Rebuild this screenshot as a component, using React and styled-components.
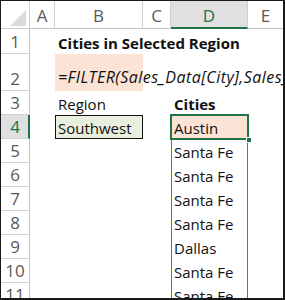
import React from "react";
import styled, { createGlobalStyle, css } from "styled-components";

const Global = createGlobalStyle`
  html, body { margin: 0; padding: 0; background: #fff; }
  * { box-sizing: border-box; }
`;

const COLS = [29, 25, 88, 28, 77, 35];
const ROWS = [28, 25, 37, 24, 24, 24, 24, 24, 24, 24, 24, 24];

const Frame = styled.div`
  width: 285px;
  height: 300px;
  overflow: hidden;
  border-top: 1px solid #1a1a1a;
  border-left: 1px solid #1a1a1a;
  border-right: 2px solid #1a1a1a;
  border-bottom: 2px solid #1a1a1a;
  background: #fff;
`;

const Sheet = styled.div`
  display: grid;
  grid-template-columns: ${COLS.map((c) => c + "px").join(" ")};
  grid-template-rows: ${ROWS.map((r) => r + "px").join(" ")};
  font-family: "Open Sans", "Noto Sans", sans-serif;
  font-size: 15px;
  color: #111;
`;

const Corner = styled.div`
  position: relative;
  border-right: 1px solid #d0d0d0;
  border-bottom: 1px solid #d0d0d0;
`;

const CornerTri = styled.svg`
  position: absolute;
  left: 9px;
  top: 9px;
`;

const ColHead = styled.div`
  display: flex;
  align-items: center;
  justify-content: center;
  color: #5a5a5a;
  font-size: 17px;
  border-right: 1px solid #d0d0d0;
  border-bottom: 1px solid #c4c4c4;
  padding-top: 2px;
  ${(p) =>
    p.$active &&
    css`
      background: #e0e0e0;
      color: #217346;
      border-bottom: 2px solid #217346;
      padding-top: 3px;
    `}
  ${(p) => p.$last && css`border-right: none;`}
`;

const RowHead = styled.div`
  display: flex;
  align-items: flex-end;
  justify-content: center;
  padding-bottom: 0;
  color: #5a5a5a;
  font-size: 17px;
  border-right: 1px solid #c4c4c4;
  border-bottom: 1px solid #d0d0d0;
  ${(p) =>
    p.$active &&
    css`
      background: #e0e0e0;
      color: #217346;
      border-right: 2px solid #217346;
      padding-left: 1px;
    `}
`;

const Cell = styled.div`
  position: relative;
  display: flex;
  align-items: flex-end;
  padding: 0 0 1px 3px;
  white-space: nowrap;
  overflow: visible;
  ${(p) => p.$bold && css`font-weight: 700;`}
  ${(p) =>
    p.$formula &&
    css`
      background: #fbe3d6;
      font-style: italic;
      font-size: 16px;
      letter-spacing: 0.45px;
      padding-bottom: 3px;
      z-index: 1;
    `}
  ${(p) =>
    p.$input &&
    css`
      background: #e9efdf;
      outline: 1px solid #111;
      outline-offset: -1px;
    `}
  ${(p) =>
    p.$spill &&
    css`
      border-left: 1px solid #4a72c2;
      border-right: 1px solid #4a72c2;
      padding-left: 2px;
    `}
  ${(p) =>
    p.$activeCell &&
    css`
      background: #fbe3d6;
      outline: 2px solid #217346;
      outline-offset: -1px;
      z-index: 2;
    `}
`;

const FillHandle = styled.span`
  position: absolute;
  right: -4px;
  bottom: -4px;
  width: 6px;
  height: 6px;
  background: #217346;
  border: 1px solid #fff;
  z-index: 3;
`;

const letters = ["A", "B", "C", "D", "E"];
const cities = ["Santa Fe", "Santa Fe", "Santa Fe", "Santa Fe", "Dallas", "Santa Fe", "Santa Fe"];

function rowCells(r) {
  const blank = (k) => <Cell key={k} />;
  if (r === 1)
    return [blank("a"), <Cell key="b" $bold>Cities in Selected Region</Cell>, blank("c"), blank("d"), blank("e")];
  if (r === 2)
    return [
      blank("a"),
      <Cell key="b" $formula>=FILTER(Sales_Data[City],Sales_Data[Region]=B4)</Cell>,
      blank("c"),
      blank("d"),
      blank("e"),
    ];
  if (r === 3)
    return [blank("a"), <Cell key="b">Region</Cell>, blank("c"), <Cell key="d" $bold>Cities</Cell>, blank("e")];
  if (r === 4)
    return [
      blank("a"),
      <Cell key="b" $input>Southwest</Cell>,
      blank("c"),
      <Cell key="d" $activeCell>
        Austin
        <FillHandle />
      </Cell>,
      blank("e"),
    ];
  return [blank("a"), blank("b"), blank("c"), <Cell key="d" $spill>{cities[r - 5]}</Cell>, blank("e")];
}

export default function App() {
  return (
    <>
      <Global />
      <Frame>
        <Sheet>
          <Corner>
            <CornerTri width="16" height="16" viewBox="0 0 16 16">
              <polygon points="16,0 16,16 0,16" fill="#dadada" />
            </CornerTri>
          </Corner>
          {letters.map((l, i) => (
            <ColHead key={l} $active={l === "D"} $last={i === letters.length - 1}>
              {l}
            </ColHead>
          ))}
          {Array.from({ length: 11 }, (_, i) => i + 1).map((r) => (
            <React.Fragment key={r}>
              <RowHead $active={r === 4}>{r}</RowHead>
              {rowCells(r)}
            </React.Fragment>
          ))}
        </Sheet>
      </Frame>
    </>
  );
}
